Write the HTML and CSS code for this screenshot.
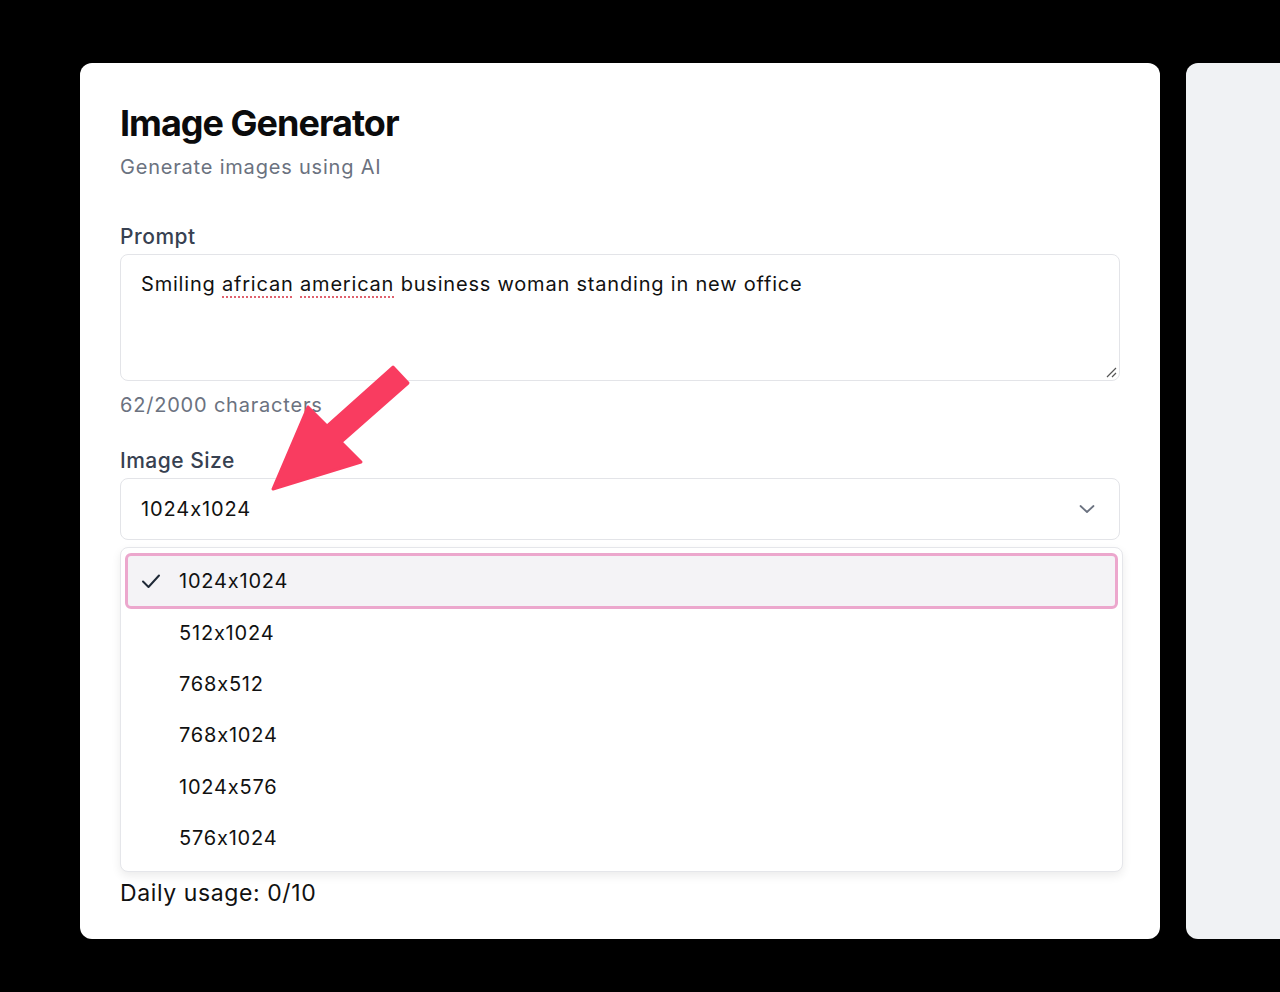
FILE: index.html
```html
<!DOCTYPE html>
<html lang="en">
<head>
	<meta charset="UTF-8">
	<meta name="viewport" content="width=device-width, initial-scale=1.0">
	<title>Image Generator</title>
	<link rel="stylesheet" href="styles.css">
</head>
<body>

	<div class="screen">
		<div class="card">
			<h1 class="card__title">Image Generator</h1>
			<p class="card__subtitle">Generate images using AI</p>

			<div class="field">
				<label class="field__label">Prompt</label>
				<div class="textarea">
					Smiling <span class="typo">african</span> <span class="typo">american</span> business woman standing in new office
					<svg class="textarea__grip" width="12" height="12" viewBox="0 0 12 12">
						<path d="M2 11 L11 2 M7 11 L11 7" stroke="#555" stroke-width="1.2" fill="none"/>
					</svg>
				</div>
				<div class="field__hint">62/2000 characters</div>
			</div>

			<div class="field field--size">
				<label class="field__label">Image Size</label>
				<div class="select">
					<span>1024x1024</span>
					<svg width="16" height="10" viewBox="0 0 16 10">
						<path d="M1.5 2 L8 8 L14.5 2" stroke="#6b7280" stroke-width="1.8" fill="none" stroke-linecap="round" stroke-linejoin="round"/>
					</svg>
				</div>
				<ul class="menu">
					<li class="menu__item menu__item--active">
						<svg class="menu__check" width="20" height="16" viewBox="0 0 20 16">
							<path d="M2 8.5 L7.5 14 L18 2.5" stroke="#1f2937" stroke-width="2" fill="none" stroke-linecap="round" stroke-linejoin="round"/>
						</svg>
						1024x1024
					</li>
					<li class="menu__item">512x1024</li>
					<li class="menu__item">768x512</li>
					<li class="menu__item">768x1024</li>
					<li class="menu__item">1024x576</li>
					<li class="menu__item">576x1024</li>
				</ul>
			</div>

			<div class="usage">Daily usage: 0/10</div>
		</div>
		<div class="panel"></div>
	</div>

	<svg class="arrow" width="1280" height="992" viewBox="0 0 1280 992">
		<polygon points="273,489 308,407 327,426 393,367 408,383 341,442 361,462" fill="#f93c60" stroke="#f93c60" stroke-width="3" stroke-linejoin="round"/>
	</svg>

</body>
</html>
```

FILE: styles.css
```css
* {
    margin: 0;
    padding: 0;
    box-sizing: border-box;
}

body {
    background: #000;
    font-family: Inter, 'Noto Sans', sans-serif;
    font-feature-settings: "calt" 0;
    overflow: hidden;
}

.screen {
    display: flex;
    gap: 26px;
    padding: 63px 0 0 80px;
    height: 992px;
}

.card {
    flex: 0 0 1080px;
    min-width: 0;
    height: 876px;
    background: #fff;
    border-radius: 12px;
    padding: 36px 40px 0;
}

.card__title {
    font-size: 36px;
    line-height: 48px;
    font-weight: 700;
    letter-spacing: -1px;
    color: #0b0b0c;
}

.card__subtitle {
    font-size: 20px;
    line-height: 28px;
    letter-spacing: 0.8px;
    color: #6b7280;
    margin-top: 6px;
}

.field {
    margin-top: 42px;
}

.field--size {
    margin-top: 28px;
}

.field__label {
    display: block;
    font-size: 21px;
    line-height: 28px;
    font-weight: 500;
    letter-spacing: 0.5px;
    color: #374151;
    margin-bottom: 3px;
}

.textarea {
    position: relative;
    height: 127px;
    border: 1.5px solid #e3e4e8;
    border-radius: 8px;
    padding: 15px 20px;
    font-size: 20px;
    line-height: 28px;
    letter-spacing: 0.8px;
    color: #111;
}

.typo {
    text-decoration: underline dotted #e0626e;
    text-decoration-thickness: 2px;
    text-underline-offset: 5px;
}

.textarea__grip {
    position: absolute;
    right: 2px;
    bottom: 2px;
}

.field__hint {
    font-size: 20px;
    line-height: 28px;
    letter-spacing: 0.8px;
    color: #6b7280;
    margin-top: 10px;
}

.select {
    display: flex;
    justify-content: space-between;
    align-items: center;
    height: 62px;
    border: 1.5px solid #e3e4e8;
    border-radius: 8px;
    padding: 0 24px 0 20px;
    font-size: 20px;
    letter-spacing: 0.9px;
    color: #111;
}

.menu {
    list-style: none;
    margin: 7px -3px 0 0;
    padding: 4px 4px 8px;
    border: 1px solid #e5e6ea;
    border-radius: 8px;
    background: #fff;
    box-shadow: 0 4px 10px rgba(0, 0, 0, 0.08);
}

.menu__item {
    display: flex;
    align-items: center;
    height: 51.3px;
    padding-left: 54px;
    font-size: 20px;
    letter-spacing: 0.8px;
    color: #111;
}

.menu__item--active {
    position: relative;
    height: 56px;
    margin: 1px 0 -2px;
    background: #f4f3f6;
    border: 3px solid #eca7cd;
    border-radius: 6px;
    padding-left: 51px;
}

.menu__check {
    position: absolute;
    left: 13px;
    top: 17px;
}

.usage {
    margin-top: 5px;
    font-size: 23px;
    line-height: 32px;
    letter-spacing: 0.6px;
    color: #111;
}

.panel {
    flex: 1 0 120px;
    height: 876px;
    background: #f0f2f4;
    border-radius: 12px 0 0 12px;
}

.arrow {
    position: absolute;
    left: 0;
    top: 0;
    pointer-events: none;
}
```
